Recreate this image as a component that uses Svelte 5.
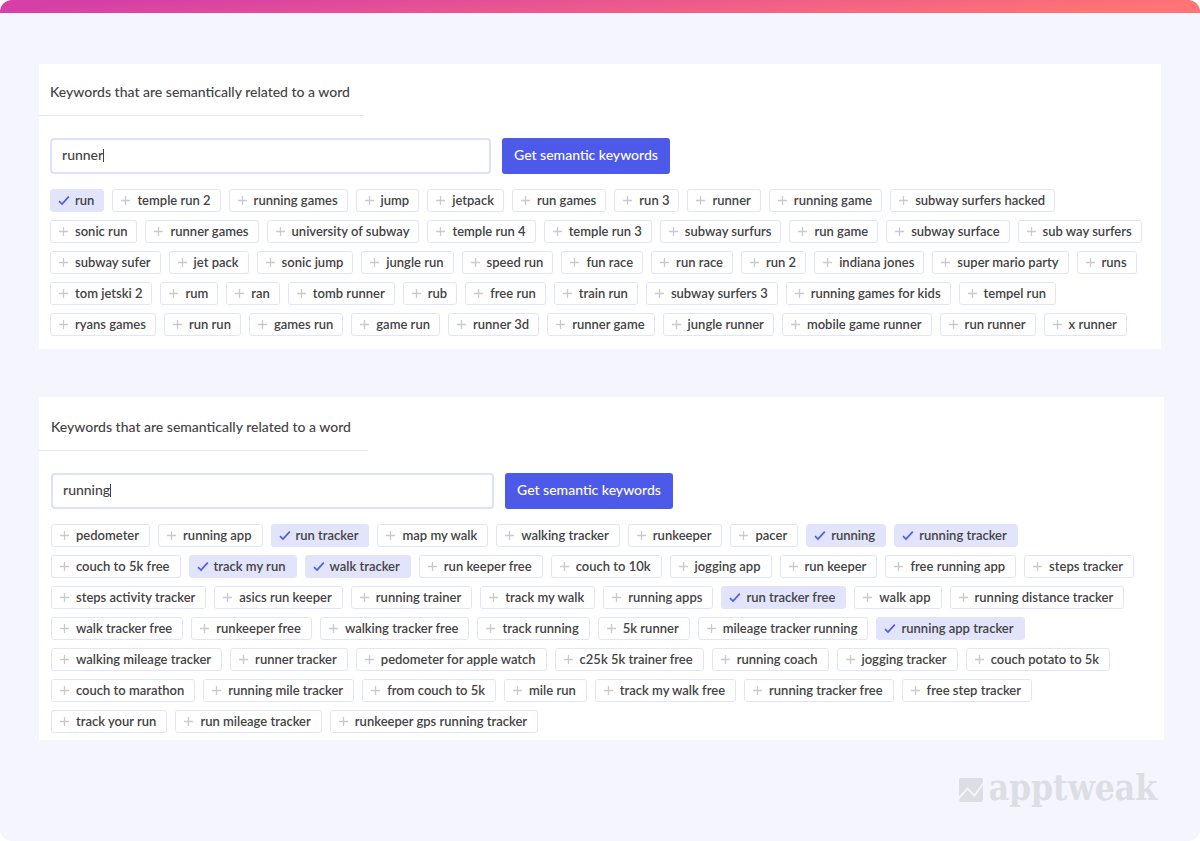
<script>
  const title = 'Keywords that are semantically related to a word';

  // A leading "*" marks a keyword that is already selected.
  const parse = (rows) =>
    rows.map((row) =>
      row.split(', ').map((word) => ({
        text: word.replace('*', ''),
        selected: word.startsWith('*')
      }))
    );

  let panels = $state([
    {
      id: 'runner',
      query: 'runner',
      rows: parse([
        '*run, temple run 2, running games, jump, jetpack, run games, run 3, runner, running game, subway surfers hacked',
        'sonic run, runner games, university of subway, temple run 4, temple run 3, subway surfurs, run game, subway surface, sub way surfers',
        'subway sufer, jet pack, sonic jump, jungle run, speed run, fun race, run race, run 2, indiana jones, super mario party, runs',
        'tom jetski 2, rum, ran, tomb runner, rub, free run, train run, subway surfers 3, running games for kids, tempel run',
        'ryans games, run run, games run, game run, runner 3d, runner game, jungle runner, mobile game runner, run runner, x runner'
      ])
    },
    {
      id: 'running',
      query: 'running',
      rows: parse([
        'pedometer, running app, *run tracker, map my walk, walking tracker, runkeeper, pacer, *running, *running tracker',
        'couch to 5k free, *track my run, *walk tracker, run keeper free, couch to 10k, jogging app, run keeper, free running app, steps tracker',
        'steps activity tracker, asics run keeper, running trainer, track my walk, running apps, *run tracker free, walk app, running distance tracker',
        'walk tracker free, runkeeper free, walking tracker free, track running, 5k runner, mileage tracker running, *running app tracker',
        'walking mileage tracker, runner tracker, pedometer for apple watch, c25k 5k trainer free, running coach, jogging tracker, couch potato to 5k',
        'couch to marathon, running mile tracker, from couch to 5k, mile run, track my walk free, running tracker free, free step tracker',
        'track your run, run mileage tracker, runkeeper gps running tracker'
      ])
    }
  ]);
</script>

<div class="page">
  <main>
    {#each panels as panel (panel.id)}
      <section class="panel {panel.id}">
        <h2><label for="query-{panel.id}">{title}</label></h2>
        <form onsubmit={(e) => e.preventDefault()}>
          <div class="field">
            <input id="query-{panel.id}" type="text" bind:value={panel.query} />
            <span class="caret"></span>
          </div>
          <button class="submit" type="submit">Get semantic keywords</button>
        </form>
        <div class="rows">
          {#each panel.rows as row}
            <div class="row">
              {#each row as word}
                <button
                  type="button"
                  class="chip"
                  class:selected={word.selected}
                  aria-pressed={word.selected}
                  onclick={() => (word.selected = !word.selected)}
                >
                  <svg viewBox="0 0 12 12" aria-hidden="true">
                    {#if word.selected}
                      <path d="M1 7.2 L4 10 L10.8 2.6" />
                    {:else}
                      <path d="M5.5 2 V11 M1 6.5 H10" />
                    {/if}
                  </svg>
                  <span>{word.text}</span>
                </button>
              {/each}
            </div>
          {/each}
        </div>
      </section>
    {/each}
  </main>
  <footer>
    <svg viewBox="0 0 24 24" aria-hidden="true">
      <path d="M2 0 H22 Q24 0 24 2 V4.2 L15.4 16.2 L8.4 9.2 L0 18.6 V2 Q0 0 2 0 Z" />
      <path d="M24 7 V22 Q24 24 22 24 H2 Q0 24 0.4 21 L8.5 11.8 L15.6 19 Z" />
    </svg>
    <span>apptweak</span>
  </footer>
</div>

<style>
  :global(body) {
    margin: 0;
    background: #fff;
  }

  .page {
    box-sizing: border-box;
    min-height: 100vh;
    overflow: hidden;
    border-radius: 12px;
    background: #f5f5ff;
    color: #434345;
    font-family: Lato, sans-serif;
    font-size: 14px;
    font-weight: 500;
  }

  .page::before {
    content: '';
    display: block;
    height: 13px;
    background: linear-gradient(176deg, #d63fa6 10%, #ff7474 90%);
  }

  main {
    display: grid;
    gap: 48px;
    padding: 51px 36px 0 39px;
  }

  .panel {
    --inset: 11px;
    --chip-end: 9px;
    background: #fff;
    padding-bottom: 13px;
  }

  .panel.runner {
    margin-right: 3px;
  }

  .panel.running {
    --inset: 12px;
    --chip-end: 10px;
    padding-bottom: 7px;
  }

  h2 {
    display: block;
    width: fit-content;
    margin: 0;
    padding: 18px 14px 13px var(--inset);
    border-bottom: 1px solid #e4e4ff;
    font: inherit;
    line-height: 20px;
  }

  .running h2 {
    padding: 20px 17px 13px var(--inset);
  }

  form {
    display: flex;
    gap: 11px;
    padding: 22px var(--inset) 15px;
  }

  .field {
    box-sizing: border-box;
    display: flex;
    align-items: center;
    flex: 0 1 441px;
    height: 36px;
    padding: 0 10px 3px;
    border: 2px solid #dfe0ff;
    border-radius: 4px;
  }

  .running .field {
    flex-basis: 443px;
  }

  input {
    field-sizing: content;
    padding: 0;
    border: 0;
    outline: 0;
    background: none;
    color: inherit;
    font: inherit;
    caret-color: transparent;
  }

  .caret {
    width: 1px;
    height: 13px;
    margin-top: 2px;
    background: #434345;
  }

  .submit {
    height: 36px;
    padding: 0 12px 3px;
    border: 0;
    border-radius: 3px;
    background: #4d59e8;
    color: #fff;
    font: inherit;
  }

  .rows {
    display: grid;
    gap: 8px;
    padding: 0 0 0 var(--inset);
  }

  .row {
    display: flex;
    flex-wrap: wrap;
    gap: 8px;
  }

  .chip {
    display: flex;
    align-items: center;
    gap: 5px;
    height: 23px;
    padding: 0 var(--chip-end) 2px 7px;
    border: 1px solid #e2e3ff;
    border-radius: 3px;
    background: #fff;
    color: inherit;
    font: inherit;
    font-size: 13px;
    font-weight: 600;
    line-height: 18px;
    white-space: nowrap;
  }

  .chip svg {
    width: 12px;
    height: 12px;
    fill: none;
    stroke: #c9c9ce;
    stroke-width: 1.3;
  }

  .chip.selected {
    border-color: #e2e4fb;
    background: #e2e4fb;
  }

  .chip.selected svg {
    stroke: #4d59e8;
    stroke-width: 1.6;
  }

  footer {
    display: flex;
    justify-content: flex-end;
    align-items: center;
    gap: 6px;
    padding: 26px 43px 0;
    color: #dddde4;
    font-family: 'DejaVu Serif Condensed', 'DejaVu Serif', serif;
    font-size: 35px;
    font-weight: 700;
    line-height: 44px;
  }

  footer svg {
    width: 24px;
    height: 24px;
    padding-top: 4px;
    fill: #dddde4;
  }
</style>
